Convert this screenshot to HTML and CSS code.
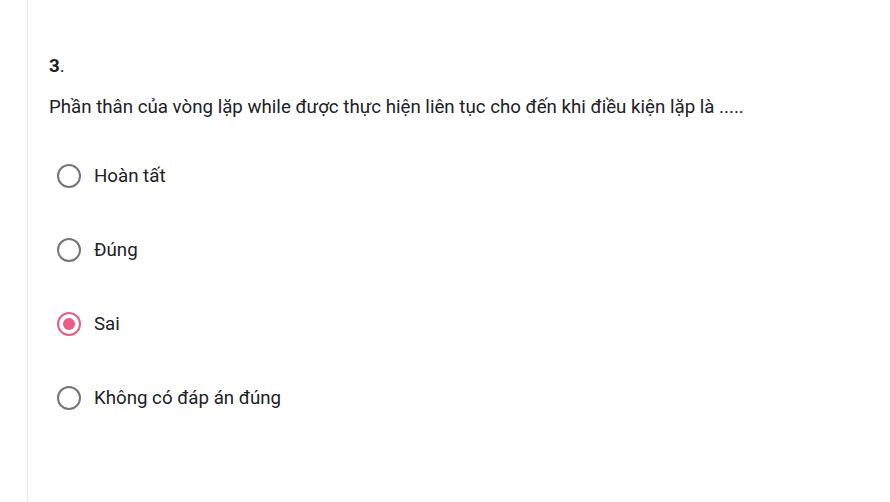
FILE: index.html
```html
<!DOCTYPE html>
<html>
<head>
<meta charset="utf-8">
<link rel="stylesheet" href="styles.css">
</head>
<body>
<div class="page">
  <div class="card">
    <div class="qnum"><b>3</b>.</div>
    <div class="qtext">Phần thân của vòng lặp while được thực hiện liên tục cho đến khi điều kiện lặp là .....</div>
    <div class="options">
      <label class="opt"><span class="radio"></span><span class="label">Hoàn tất</span></label>
      <label class="opt"><span class="radio"></span><span class="label">Đúng</span></label>
      <label class="opt"><span class="radio checked"></span><span class="label">Sai</span></label>
      <label class="opt"><span class="radio"></span><span class="label">Không có đáp án đúng</span></label>
    </div>
  </div>
</div>
</body>
</html>
```
FILE: styles.css
```css
html, body {
  margin: 0;
  padding: 0;
  background: #fff;
}
body {
  font-family: Roboto, "Liberation Sans", sans-serif;
  color: #202124;
}
.page {
  height: 502px;
  padding-left: 27px;
  box-sizing: border-box;
}
.card {
  height: 100%;
  border-left: 1px solid #e6e6e6;
  padding: 54px 0 0 21px;
  box-sizing: border-box;
}
.qnum {
  font-size: 18.7px;
  line-height: 24px;
}
.qnum b {
  font-weight: 700;
}
.qtext {
  margin-top: 17px;
  font-size: 18.7px;
  line-height: 24px;
}
.options {
  display: flex;
  flex-direction: column;
  margin-top: 45px;
  gap: 50px;
}
.opt {
  display: flex;
  align-items: center;
  gap: 13px;
  height: 24px;
  padding-left: 8px;
}
.radio {
  width: 20px;
  height: 20px;
  border: 2px solid #757575;
  border-radius: 50%;
  box-sizing: content-box;
  display: flex;
  align-items: center;
  justify-content: center;
}
.radio.checked {
  border-color: #ec5a86;
}
.radio.checked::after {
  content: "";
  width: 12px;
  height: 12px;
  border-radius: 50%;
  background: #ec5a86;
}
.label {
  font-size: 18.7px;
  line-height: 24px;
}
```
